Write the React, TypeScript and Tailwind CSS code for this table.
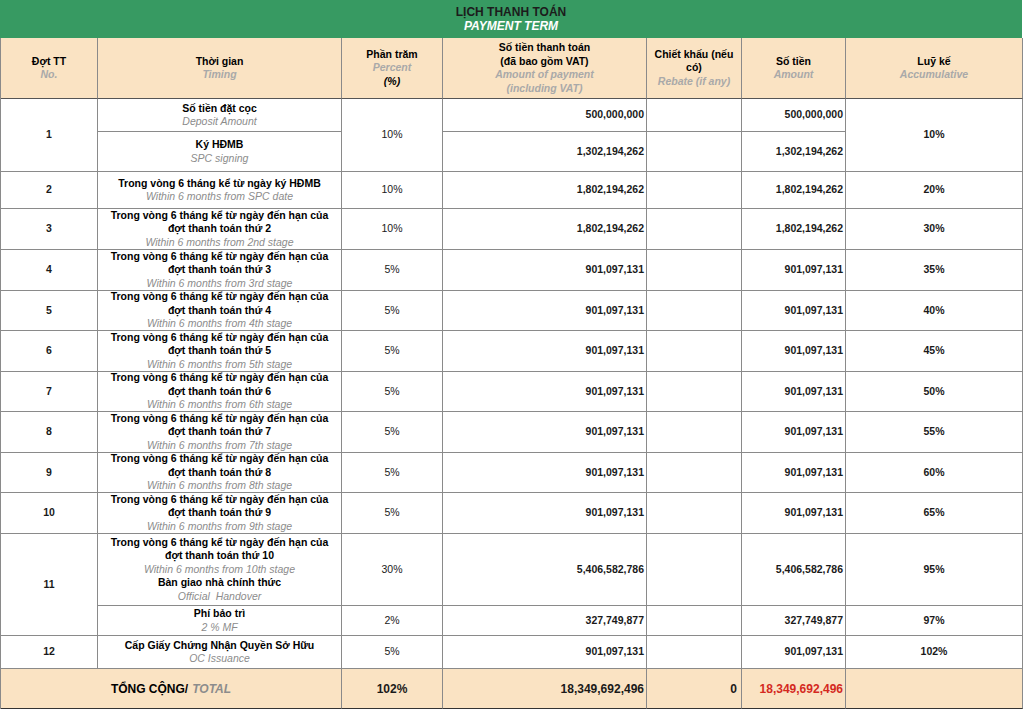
import React from "react";

const money = "justify-end pr-[2px] font-bold";

function Timing({ vi, en }: { vi: React.ReactNode; en: string }) {
  return (
    <div className="flex flex-col items-center text-center leading-[13.5px]">
      <span className="font-bold text-black">{vi}</span>
      <span className="italic text-[#8c8c8c]">{en}</span>
    </div>
  );
}

function Head({ vi, en }: { vi: React.ReactNode; en: React.ReactNode }) {
  return (
    <div className="flex flex-col items-center text-center leading-[13.5px]">
      <span className="font-bold text-black">{vi}</span>
      <span className="italic font-bold text-[#a9a9a9]">{en}</span>
    </div>
  );
}

const stages = [3, 4, 5, 6, 7, 8, 9];

export default function App() {
  const c = "flex items-center border-r border-b border-[#8a8a8a] overflow-hidden";
  const tot = "bg-[#fae3c3] border-b-[#333] text-[12px] font-bold";
  return (
    <div className="w-[1024px] h-[711px] bg-white text-[10.5px] text-[#1a1a1a] font-['Liberation_Sans',Arial,sans-serif]">
      <div className="w-[1022px] h-[38px] bg-[#379a62] flex flex-col items-center justify-center leading-[14px] text-[12px] font-bold">
        <span className="text-[#1c1c1c]">LỊCH THANH TOÁN</span>
        <span className="italic text-white">PAYMENT TERM</span>
      </div>
      <div className="grid w-[1022px] grid-cols-[97px_244px_101px_204px_95px_104px_177px] grid-rows-[61px_33px_40px_37px_41px_41px_40px_41px_40px_41px_40px_41px_72px_30px_33px_40px] border-l border-[#8a8a8a]">
        {/* header */}
        <div className={`${c} justify-center bg-[#fae3c3] border-b-[#555]`}>
          <Head vi="Đợt TT" en="No." />
        </div>
        <div className={`${c} justify-center bg-[#fae3c3] border-b-[#555]`}>
          <Head vi="Thời gian" en="Timing" />
        </div>
        <div className={`${c} justify-center bg-[#fae3c3] border-b-[#555]`}>
          <Head vi="Phần trăm" en={<>Percent<br /><span className="text-black">(%)</span></>} />
        </div>
        <div className={`${c} justify-center bg-[#fae3c3] border-b-[#555]`}>
          <Head vi={<>Số tiền thanh toán<br />(đã bao gồm VAT)</>} en={<>Amount of payment<br />(including VAT)</>} />
        </div>
        <div className={`${c} justify-center bg-[#fae3c3] border-b-[#555]`}>
          <Head vi={<>Chiết khấu (nếu<br />có)</>} en="Rebate (if any)" />
        </div>
        <div className={`${c} justify-center bg-[#fae3c3] border-b-[#555]`}>
          <Head vi="Số tiền" en="Amount" />
        </div>
        <div className={`${c} justify-center bg-[#fae3c3] border-b-[#555]`}>
          <Head vi="Luỹ kế" en="Accumulative" />
        </div>

        {/* row 1 */}
        <div className={`${c} row-span-2 justify-center font-bold`}>1</div>
        <div className={`${c} justify-center`}>
          <Timing vi="Số tiền đặt cọc" en="Deposit Amount" />
        </div>
        <div className={`${c} row-span-2 justify-center`}>10%</div>
        <div className={`${c} ${money}`}>500,000,000</div>
        <div className={c}></div>
        <div className={`${c} ${money}`}>500,000,000</div>
        <div className={`${c} row-span-2 justify-center font-bold`}>10%</div>
        <div className={`${c} justify-center`}>
          <Timing vi="Ký HĐMB" en="SPC signing" />
        </div>
        <div className={`${c} ${money}`}>1,302,194,262</div>
        <div className={c}></div>
        <div className={`${c} ${money}`}>1,302,194,262</div>

        {/* row 2 */}
        <div className={`${c} justify-center font-bold`}>2</div>
        <div className={`${c} justify-center`}>
          <Timing vi="Trong vòng 6 tháng kể từ ngày ký HĐMB" en="Within 6 months from SPC date" />
        </div>
        <div className={`${c} justify-center`}>10%</div>
        <div className={`${c} ${money}`}>1,802,194,262</div>
        <div className={c}></div>
        <div className={`${c} ${money}`}>1,802,194,262</div>
        <div className={`${c} justify-center font-bold`}>20%</div>

        {/* row 3 */}
        <div className={`${c} justify-center font-bold`}>3</div>
        <div className={`${c} justify-center`}>
          <Timing
            vi={<>Trong vòng 6 tháng kể từ ngày đến hạn của<br />đợt thanh toán thứ 2</>}
            en="Within 6 months from 2nd stage"
          />
        </div>
        <div className={`${c} justify-center`}>10%</div>
        <div className={`${c} ${money}`}>1,802,194,262</div>
        <div className={c}></div>
        <div className={`${c} ${money}`}>1,802,194,262</div>
        <div className={`${c} justify-center font-bold`}>30%</div>

        {/* rows 4-10 */}
        {stages.map((s, i) => {
          const ord = s === 3 ? "3rd" : `${s}th`;
          return (
            <React.Fragment key={s}>
              <div className={`${c} justify-center font-bold`}>{s + 1}</div>
              <div className={`${c} justify-center`}>
                <Timing
                  vi={<>Trong vòng 6 tháng kể từ ngày đến hạn của<br />đợt thanh toán thứ {s}</>}
                  en={`Within 6 months from ${ord} stage`}
                />
              </div>
              <div className={`${c} justify-center`}>5%</div>
              <div className={`${c} ${money}`}>901,097,131</div>
              <div className={c}></div>
              <div className={`${c} ${money}`}>901,097,131</div>
              <div className={`${c} justify-center font-bold`}>{35 + i * 5}%</div>
            </React.Fragment>
          );
        })}

        {/* row 11 */}
        <div className={`${c} row-span-2 justify-center font-bold`}>11</div>
        <div className={`${c} justify-center`}>
          <div className="flex flex-col items-center text-center leading-[13.5px]">
            <span className="font-bold text-black">Trong vòng 6 tháng kể từ ngày đến hạn của</span>
            <span className="font-bold text-black">đợt thanh toán thứ 10</span>
            <span className="italic text-[#8c8c8c]">Within 6 months from 10th stage</span>
            <span className="font-bold text-black">Bàn giao nhà chính thức</span>
            <span className="italic text-[#8c8c8c]">Official&nbsp; Handover</span>
          </div>
        </div>
        <div className={`${c} justify-center`}>30%</div>
        <div className={`${c} ${money}`}>5,406,582,786</div>
        <div className={c}></div>
        <div className={`${c} ${money}`}>5,406,582,786</div>
        <div className={`${c} justify-center font-bold`}>95%</div>
        <div className={`${c} justify-center`}>
          <Timing vi="Phí bảo trì" en="2 % MF" />
        </div>
        <div className={`${c} justify-center`}>2%</div>
        <div className={`${c} ${money}`}>327,749,877</div>
        <div className={c}></div>
        <div className={`${c} ${money}`}>327,749,877</div>
        <div className={`${c} justify-center font-bold`}>97%</div>

        {/* row 12 */}
        <div className={`${c} justify-center font-bold`}>12</div>
        <div className={`${c} justify-center`}>
          <Timing vi="Cấp Giấy Chứng Nhận Quyền Sở Hữu" en="OC Issuance" />
        </div>
        <div className={`${c} justify-center`}>5%</div>
        <div className={`${c} ${money}`}>901,097,131</div>
        <div className={c}></div>
        <div className={`${c} ${money}`}>901,097,131</div>
        <div className={`${c} justify-center font-bold`}>102%</div>

        {/* total */}
        <div className={`${c} col-span-2 justify-center ${tot} text-[12.5px]`}>
          <span className="text-black">TỔNG CỘNG/</span>
          <span className="ml-[4px] italic text-[#8c8c8c]">TOTAL</span>
        </div>
        <div className={`${c} justify-center ${tot}`}>102%</div>
        <div className={`${c} ${money} ${tot}`}>18,349,692,496</div>
        <div className={`${c} ${money} pr-[4px] ${tot}`}>0</div>
        <div className={`${c} ${money} ${tot} text-[#d42a1f]`}>18,349,692,496</div>
        <div className={`${c} bg-[#fae3c3] border-b-[#333]`}></div>
      </div>
    </div>
  );
}
